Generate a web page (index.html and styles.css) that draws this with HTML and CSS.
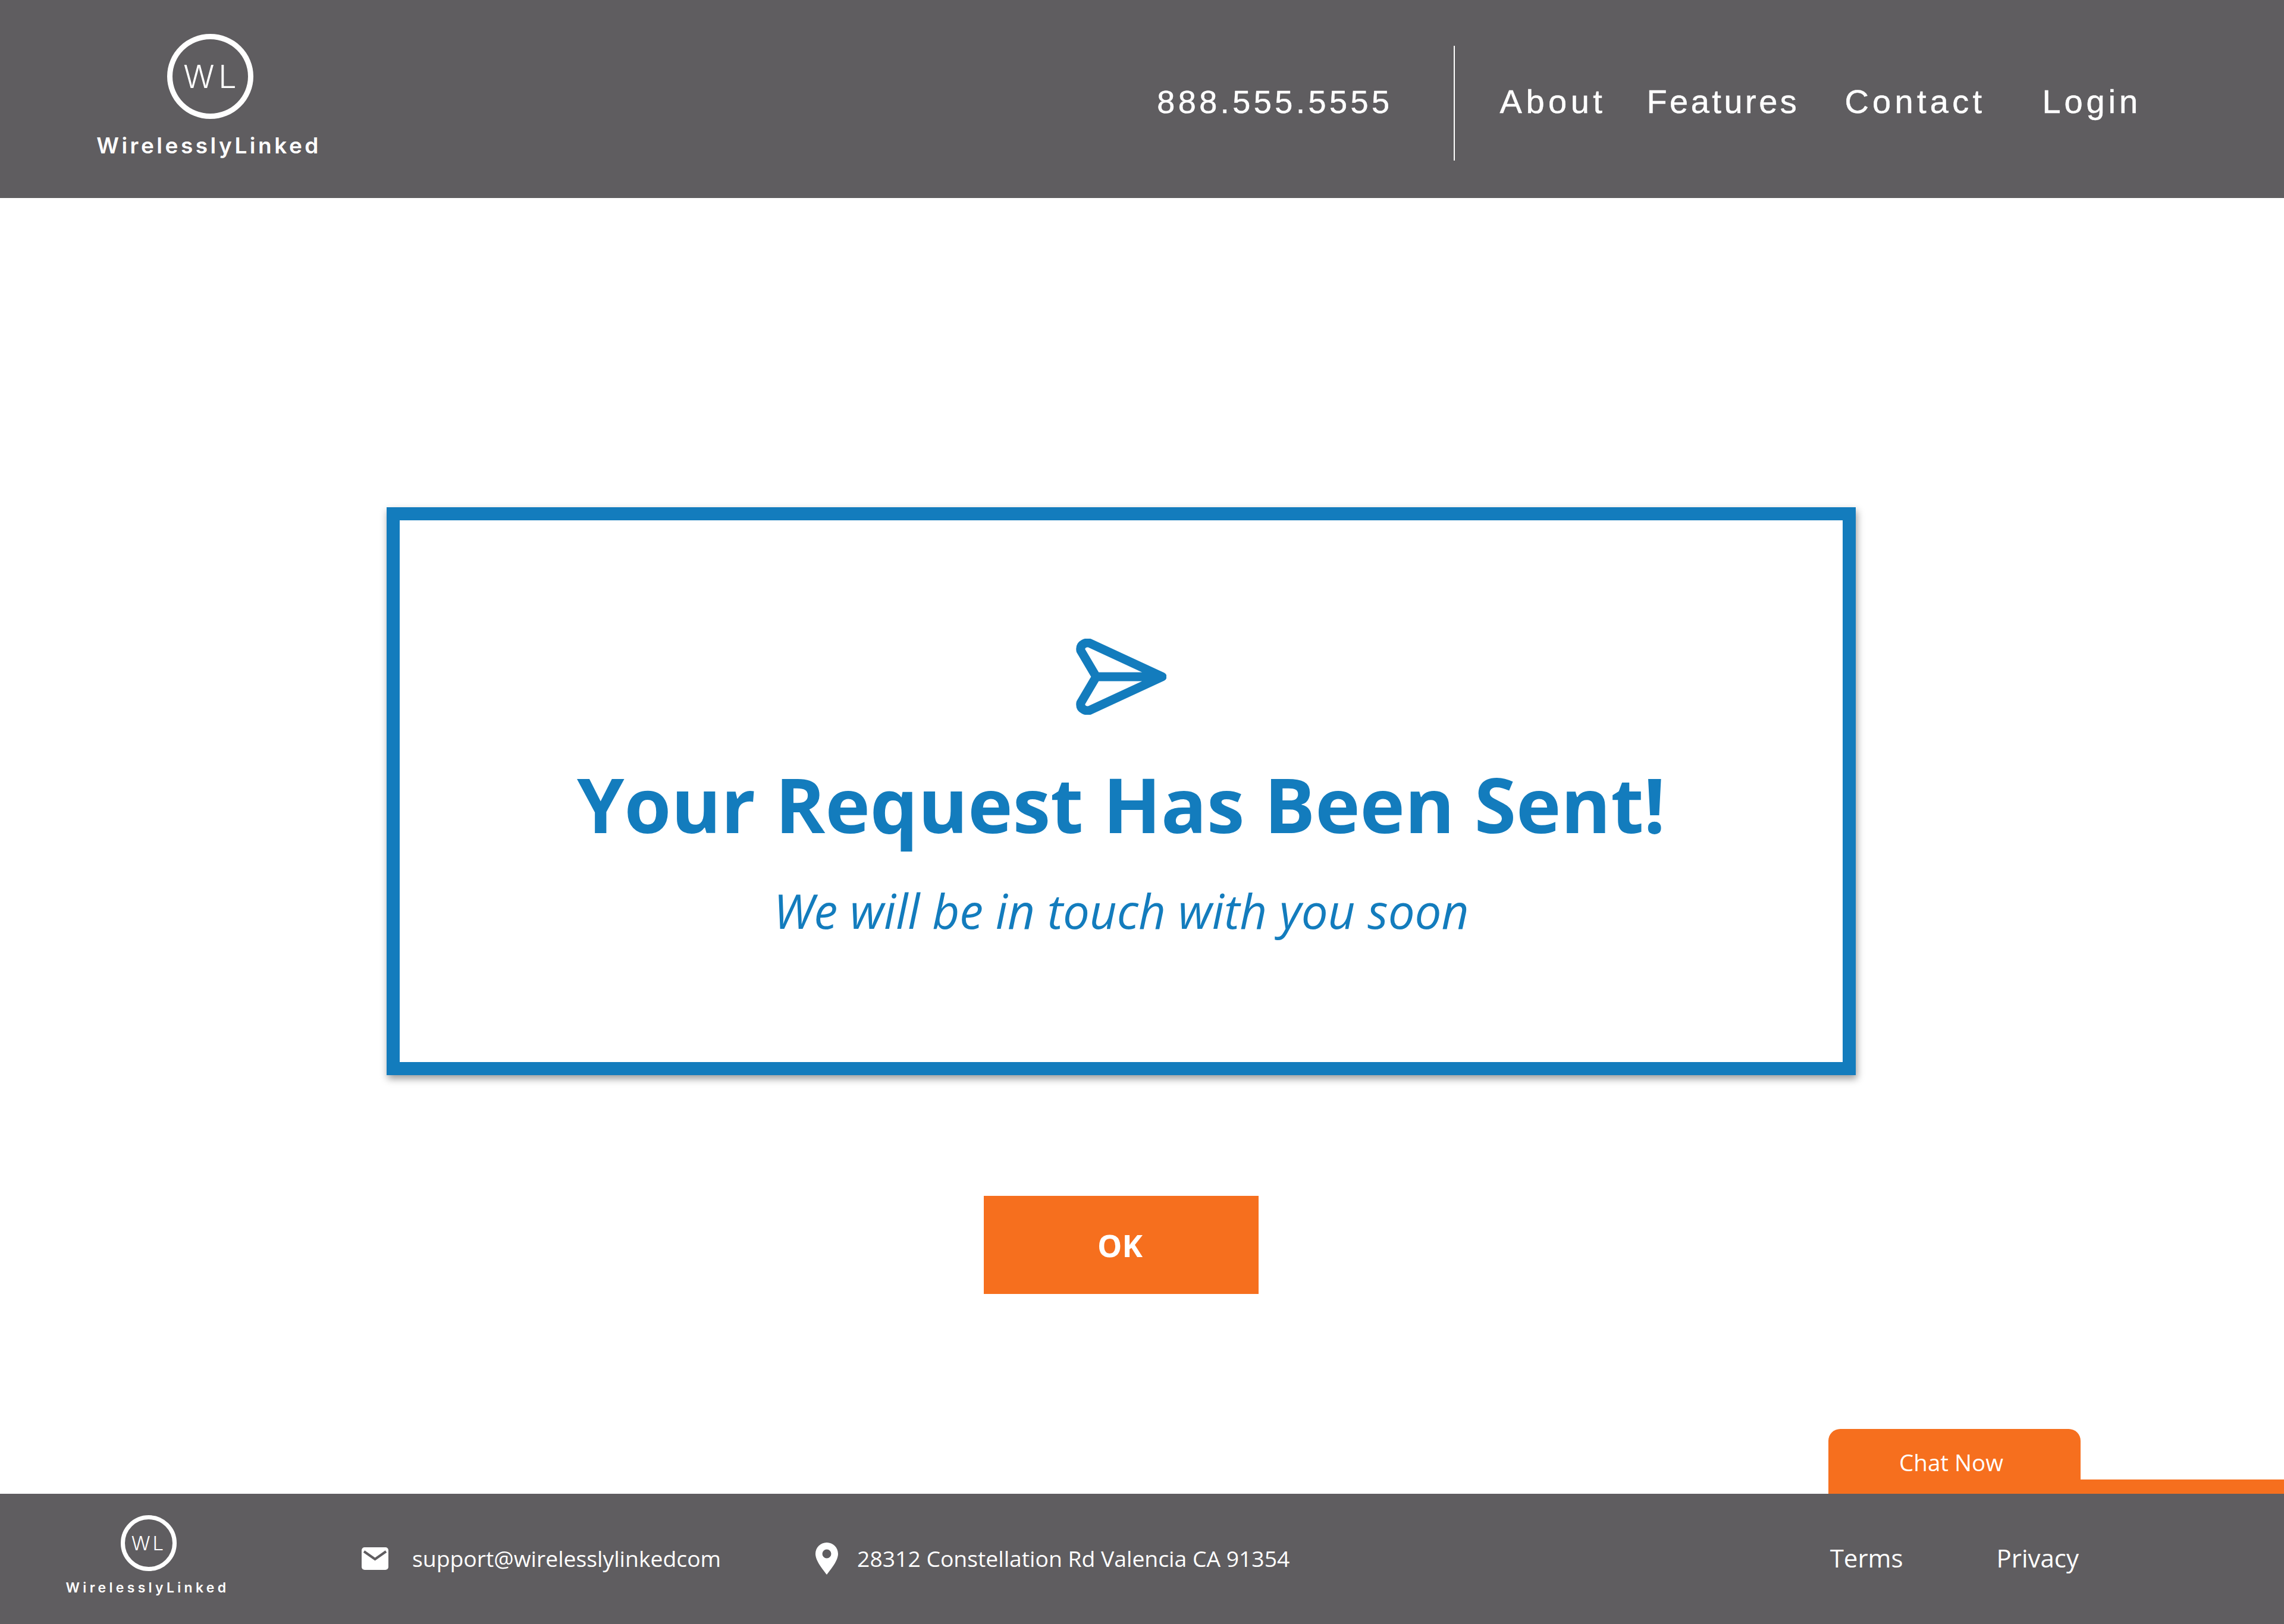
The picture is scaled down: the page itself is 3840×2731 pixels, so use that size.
FILE: index.html
```html
<!DOCTYPE html>
<html lang="en">
<head>
<meta charset="utf-8">
<title>Wirelessly Linked</title>
<link rel="stylesheet" href="styles.css">
</head>
<body>
<header class="site-header">
  <a class="logo">
    <span class="logo-mark">WL</span>
    <span class="logo-name">WirelesslyLinked</span>
  </a>
  <div class="header-right">
    <span class="phone">888.555.5555</span>
    <span class="divider"></span>
    <nav class="nav">
      <a class="nav-about">About</a>
      <a class="nav-features">Features</a>
      <a class="nav-contact">Contact</a>
      <a class="nav-login">Login</a>
    </nav>
  </div>
</header>
<main class="content">
  <section class="card">
    <svg class="plane" viewBox="0 0 152 128" aria-hidden="true">
      <path d="M23 7.500 C 19 6 6 8 8 20 L 34 64 L 8 108 C 6 120 19 122 23 120.500 L 145 64 Z M34 64 H 145"/>
    </svg>
    <h1 class="card-title">Your Request Has Been Sent!</h1>
    <p class="card-sub">We will be in touch with you soon</p>
  </section>
  <button class="ok">OK</button>
</main>
<footer class="site-footer">
  <div class="chat">
    <a class="chat-tab">Chat Now</a>
    <span class="chat-strip"></span>
  </div>
  <a class="foot-logo">
    <span class="foot-mark">WL</span>
    <span class="foot-name">WirelesslyLinked</span>
  </a>
  <div class="foot-item foot-mail">
    <svg class="mail-icon" viewBox="0 0 45 38" aria-hidden="true">
      <rect width="45" height="38" rx="5" class="fill-white"/>
      <path d="M4 7 L22.500 20 L41 7" class="mail-line"/>
    </svg>
    <span>support@wirelesslylinkedcom</span>
  </div>
  <div class="foot-item foot-addr">
    <svg class="pin-icon" viewBox="0 0 38 54" aria-hidden="true">
      <path fill-rule="evenodd" class="fill-white" d="M19 0 C8.500 0 0 8.500 0 19 C0 31 13 46 19 54 C25 46 38 31 38 19 C38 8.500 29.500 0 19 0 Z M19 11.500 A7.500 7.500 0 1 1 19 26.500 A7.500 7.500 0 1 1 19 11.500 Z"/>
    </svg>
    <span>28312 Constellation Rd Valencia CA 91354</span>
  </div>
  <nav class="foot-links">
    <a>Terms</a>
    <a>Privacy</a>
  </nav>
</footer>
</body>
</html>
```
FILE: styles.css
```css
* { box-sizing: border-box; }
html, body { margin: 0; height: 100%; }
body {
  display: flex;
  flex-direction: column;
  min-height: 2731px;
  font-family: "Open Sans", sans-serif;
  color: #fff;
  background: #fff;
}
.site-header {
  flex: 0 0 333px;
  display: flex;
  background: #5f5d60;
  padding-left: 165px;
}
.logo {
  display: flex;
  flex-direction: column;
  align-items: center;
  width: 372px;
  padding-top: 57px;
}
.logo-mark {
  width: 145px;
  height: 143px;
  border: 9px solid #fff;
  border-radius: 50%;
  display: flex;
  align-items: center;
  justify-content: center;
  padding-left: 6px;
  font: 300 54px/1 Inter, sans-serif;
  letter-spacing: 7px;
  margin-left: 5px;
}
.logo-name {
  margin-top: 26px;
  font: 600 37px/1 Inter, sans-serif;
  letter-spacing: 4.500px;
  white-space: nowrap;
}
.header-right {
  margin-left: auto;
  display: flex;
  align-items: flex-start;
  padding-right: 240px;
}
.phone, .nav a {
  font-family: "Liberation Sans", Arial, sans-serif;
  line-height: 1;
  white-space: nowrap;
  -webkit-text-stroke: .5px #fff;
}
.phone { margin-top: 144px; font-size: 54px; letter-spacing: 5.500px; }
.divider {
  width: 2px;
  height: 193px;
  margin: 77px 76px 0 102px;
  background: #fff;
}
.nav { display: flex; margin-top: 143px; font-size: 56px; }
.nav-about { letter-spacing: 6.500px; }
.nav-features { margin-left: 68px; letter-spacing: 4.500px; }
.nav-contact { margin-left: 76px; letter-spacing: 6.300px; }
.nav-login { margin-left: 95px; letter-spacing: 5.900px; }

.content {
  flex: 1;
  display: flex;
  flex-direction: column;
  align-items: center;
  padding: 520px 70px 0 0;
}
.card {
  width: 2470px;
  height: 955px;
  flex: none;
  border: 22px solid #137cbd;
  box-shadow: 2px 6px 12px rgba(0, 0, 0, .4);
  background: #fff;
  display: flex;
  flex-direction: column;
  align-items: center;
  padding-top: 199px;
  color: #137cbd;
}
.plane { width: 152px; height: 128px; fill: none; stroke: #137cbd; stroke-width: 15; stroke-linejoin: round; }
.card-title {
  margin: 63px 0 0;
  font-size: 127.500px;
  font-weight: 700;
  line-height: 1.36;
  white-space: nowrap;
}
.card-sub {
  margin: 39px 0 0;
  font-size: 79.800px;
  font-style: italic;
  line-height: 1.36;
  white-space: nowrap;
}
.ok {
  width: 462px;
  height: 165px;
  margin-top: 203px;
  padding: 0 4px 0 0;
  border: 0;
  background: #f66f1e;
  color: #fff;
  font: 700 52px/1 "Open Sans", sans-serif;
}

.site-footer {
  flex: 0 0 219px;
  position: relative;
  display: flex;
  align-items: center;
  padding-left: 112px;
  background: #5f5d60;
}
.chat {
  position: absolute;
  left: 3074px;
  right: 0;
  bottom: 100%;
  height: 109px;
  display: flex;
  align-items: flex-end;
}
.chat-tab {
  width: 424px;
  height: 109px;
  background: #f66f1e;
  border-radius: 20px 20px 0 0;
  text-align: center;
  font-size: 38.500px;
  line-height: 56px;
  padding: 28px 11px 0 0;
}
.chat-strip { flex: 1; height: 24px; background: #f66f1e; }
.foot-logo {
  width: 272px;
  display: flex;
  flex-direction: column;
  align-items: center;
  align-self: flex-start;
  padding-top: 36px;
}
.foot-mark {
  width: 94px;
  height: 94px;
  margin-left: 4px;
  border: 7px solid #fff;
  border-radius: 50%;
  display: flex;
  align-items: center;
  justify-content: center;
  font: 300 33px/1 Inter, sans-serif;
  letter-spacing: 4px;
}
.foot-name {
  margin-top: 17px;
  font: 600 23px/1 Inter, sans-serif;
  letter-spacing: 5.300px;
  white-space: nowrap;
}
.foot-item { display: flex; align-items: center; font-size: 37.300px; white-space: nowrap; padding-bottom: 2px; }
.foot-mail { margin-left: 224px; gap: 40px; }
.foot-addr { margin-left: 159px; gap: 32px; }
.mail-icon { width: 45px; height: 38px; }
.pin-icon { width: 38px; height: 54px; }
.fill-white { fill: #fff; }
.mail-line { fill: none; stroke: #5f5d60; stroke-width: 4; }
.foot-links {
  margin-left: auto;
  margin-right: 345px;
  padding-bottom: 4px;
  display: flex;
  gap: 157px;
  font-size: 42px;
}
```
